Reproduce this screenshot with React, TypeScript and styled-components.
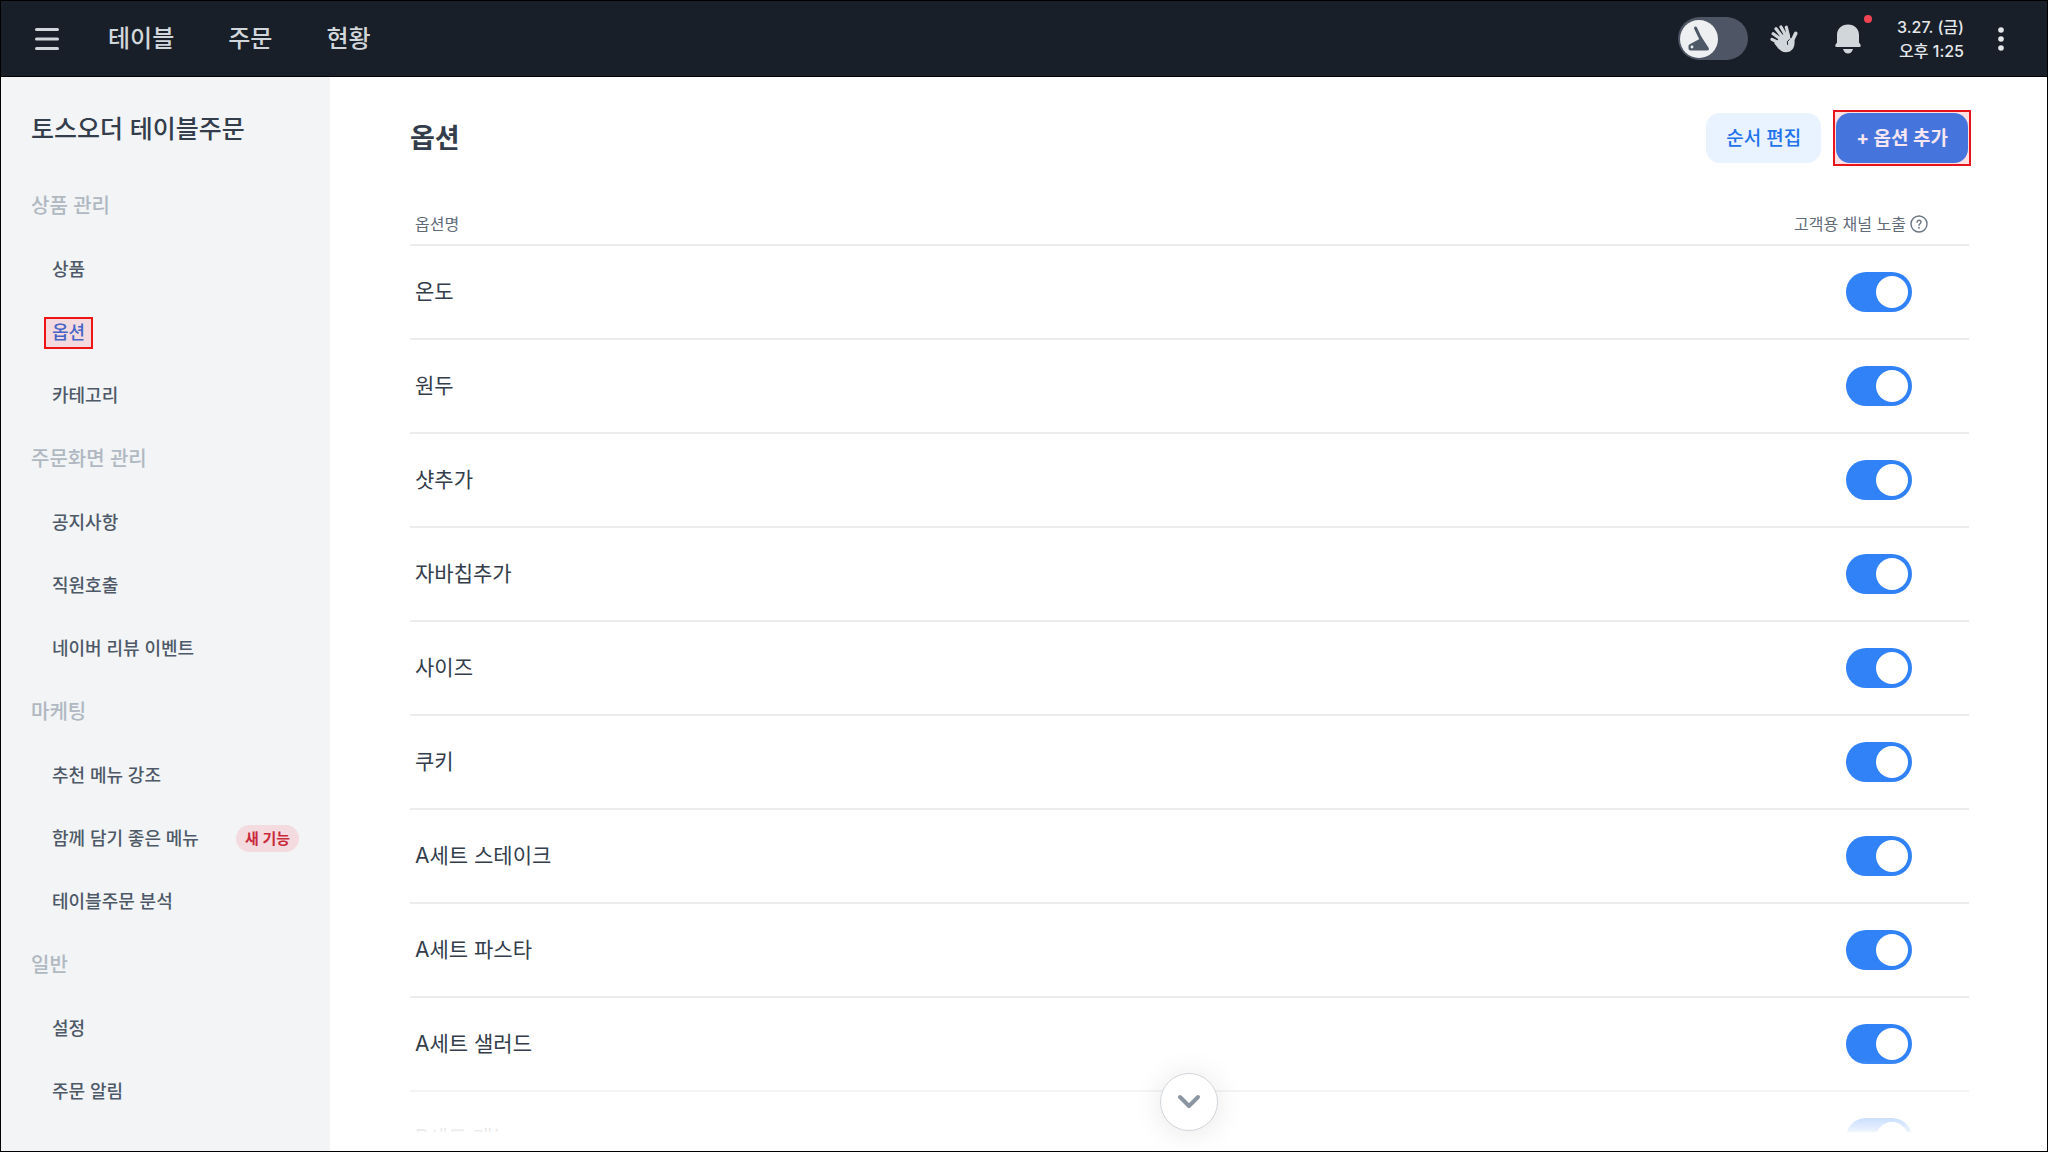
import React from "react";
import styled, { createGlobalStyle } from "styled-components";

const Global = createGlobalStyle`
  * { box-sizing: border-box; }
  body { margin: 0; font-family: Inter, "Noto Sans CJK KR", sans-serif; color: #333d4b; background: #fff; }
  button { font-family: inherit; border: 0; background: none; padding: 0; cursor: pointer; }
  a { color: inherit; text-decoration: none; }
  ul { list-style: none; margin: 0; padding: 0; }
`;

const Frame = styled.div`
  display: flex;
  flex-direction: column;
  height: 100vh;
  overflow: hidden;
  border: 1px solid #000;
`;

const TopBar = styled.header`
  display: flex;
  align-items: center;
  flex: none;
  height: 76px;
  padding: 0 30px;
  background: #191f28;
  border-bottom: 1px solid #000;
`;

const IconButton = styled.button`
  position: relative;
  display: flex;
  align-items: center;
  justify-content: center;
  width: 32px;
  height: 40px;
`;

const MainNav = styled.nav`
  display: flex;
  gap: 54px;
  margin-left: 45px;
  font-size: 24px;
  line-height: 32px;
  font-weight: 500;
  color: #d1d6db;
`;

const Status = styled.div`
  display: flex;
  align-items: center;
  margin-left: auto;
`;

const ModeSwitch = styled.label`
  position: relative;
  display: flex;
  align-items: center;
  width: 70px;
  height: 43px;
  padding: 0 2px;
  margin-right: 20px;
  border-radius: 22px;
  background: #4e5564;
  cursor: pointer;
`;

const HiddenCheck = styled.input`
  position: absolute;
  inset: 0;
  width: 100%;
  height: 100%;
  margin: 0;
  opacity: 0;
  cursor: pointer;
`;

const ModeKnob = styled.span`
  display: flex;
  align-items: center;
  justify-content: center;
  width: 38px;
  height: 38px;
  border-radius: 50%;
  background: #eeeff1;
`;

const BellButton = styled(IconButton)`
  margin-left: 32px;
`;

const AlertDot = styled.span`
  position: absolute;
  top: -4px;
  right: -8px;
  width: 8px;
  height: 8px;
  border-radius: 50%;
  background: #f04452;
`;

const Clock = styled.time`
  width: 70px;
  margin: 0 21px 0 30px;
  font-size: 16px;
  line-height: 24px;
  font-weight: 500;
  text-align: right;
  white-space: nowrap;
  color: #e5e8eb;
`;

const Body = styled.div`
  display: flex;
  flex: 1;
  min-height: 0;
`;

const SideBar = styled.aside`
  flex: none;
  width: 329px;
  padding: 32px 31px 0 30px;
  background: #f2f4f6;
`;

const SideTitle = styled.h2`
  margin: 0 0 26px;
  font-size: 25px;
  line-height: 40px;
  font-weight: 500;
`;

const Group = styled.section`
  margin-bottom: 1px;
`;

const GroupTitle = styled.h3`
  margin: 0;
  font-size: 20px;
  line-height: 63px;
  font-weight: 500;
  color: #b0b8c1;
`;

const SideItem = styled.li`
  display: flex;
  align-items: center;
  justify-content: space-between;
  height: 63px;
  padding-left: 13px;
`;

const SideLink = styled.a<{ $active?: boolean }>`
  padding: 0 6px;
  border: 2px solid ${(p) => (p.$active ? "#f01414" : "transparent")};
  background: ${(p) => (p.$active ? "#f3dade" : "transparent")};
  color: ${(p) => (p.$active ? "#4565c8" : "#4e5968")};
  font-size: 18px;
  line-height: 28px;
  font-weight: 500;
`;

const NewBadge = styled.span`
  padding: 0 9px;
  border-radius: 14px;
  background: #f4dbe0;
  color: #c92a3a;
  font-size: 15px;
  line-height: 27px;
  font-weight: 700;
`;

const Content = styled.main`
  position: relative;
  flex: 1;
  min-width: 0;
  padding: 33px 78px 0 80px;
  overflow: hidden;
`;

const Heading = styled.div`
  display: flex;
  align-items: center;
  justify-content: space-between;
  height: 56px;
  margin-right: -2px;
`;

const PageTitle = styled.h1`
  margin: 0;
  padding-top: 2px;
  font-size: 27px;
  line-height: 40px;
  font-weight: 700;
`;

const Actions = styled.div`
  display: flex;
  align-items: center;
  gap: 12px;
`;

const Action = styled.button<{ $primary?: boolean }>`
  height: 50px;
  padding: 2px 20px 0;
  border-radius: 14px;
  background: ${(p) => (p.$primary ? "#4575dc" : "#e8f3ff")};
  color: ${(p) => (p.$primary ? "#f6e6f2" : "#2272eb")};
  font-size: 19px;
  line-height: 28px;
  font-weight: ${(p) => (p.$primary ? 700 : 500)};
`;

const Marked = styled.div`
  display: flex;
  padding: 1px;
  border: 2px solid #e8141c;
  background: #ffe1e4;
`;

const Table = styled.table`
  width: 100%;
  margin-top: 30px;
  border-collapse: collapse;
  text-align: left;
`;

const HeadCell = styled.th<{ $end?: boolean }>`
  height: 49px;
  padding: ${(p) => (p.$end ? "8px 41px 0 0" : "8px 5px 0")};
  border-bottom: 2px solid #eaecee;
  font-size: 16px;
  line-height: 24px;
  font-weight: 400;
  color: #616b78;
  text-align: ${(p) => (p.$end ? "right" : "left")};
`;

const HeadLabel = styled.span`
  display: inline-flex;
  align-items: center;
  gap: 4px;
`;

const Cell = styled.td<{ $end?: boolean }>`
  height: 94px;
  padding: ${(p) => (p.$end ? "0 57px 0 0" : "0 5px")};
  border-bottom: 2px solid #eaecee;
  font-size: 21px;
  line-height: 32px;
  font-weight: 400;
  text-align: ${(p) => (p.$end ? "right" : "left")};
`;

const Toggle = styled.input`
  appearance: none;
  display: inline-flex;
  align-items: center;
  justify-content: flex-end;
  vertical-align: middle;
  width: 66px;
  height: 40px;
  margin: 0;
  padding: 0 4px;
  border-radius: 20px;
  background: #3182f6;
  cursor: pointer;

  &::before {
    content: "";
    width: 32px;
    height: 32px;
    border-radius: 50%;
    background: #fff;
  }

  &:not(:checked) {
    justify-content: flex-start;
    background: #d1d6db;
  }
`;

const Fade = styled.div`
  position: absolute;
  left: 0;
  right: 0;
  bottom: 0;
  height: 96px;
  background: linear-gradient(rgba(255, 255, 255, 0) 4%, rgba(255, 255, 255, 0.9) 79%, #fff 81%);
  pointer-events: none;
`;

const ScrollDown = styled.button`
  position: absolute;
  left: 50%;
  bottom: 20px;
  display: flex;
  align-items: center;
  justify-content: center;
  width: 58px;
  height: 58px;
  transform: translateX(-50%);
  border: 1px solid #d1d6db;
  border-radius: 50%;
  background: #fff;
  box-shadow: 0 2px 30px rgba(0, 0, 0, 0.1);
`;

const groups = [
  { title: "상품 관리", items: ["상품", "옵션", "카테고리"] },
  { title: "주문화면 관리", items: ["공지사항", "직원호출", "네이버 리뷰 이벤트"] },
  { title: "마케팅", items: ["추천 메뉴 강조", "함께 담기 좋은 메뉴", "테이블주문 분석"] },
  { title: "일반", items: ["설정", "주문 알림"] },
];

const options = [
  "온도", "원두", "샷추가", "자바칩추가", "사이즈", "쿠키",
  "A세트 스테이크", "A세트 파스타", "A세트 샐러드", "B세트 메뉴",
];

const MenuIcon = () => (
  <svg width="26" height="24" viewBox="0 0 26 24" stroke="#d1d6db" strokeWidth="3" strokeLinecap="round">
    <path d="M2.500 2.500H23.500M2.500 12H23.500M2.500 21.500H23.500" />
  </svg>
);

const PosIcon = () => (
  <svg width="24" height="28" viewBox="0 0 24 28" fill="none">
    <path d="M8.500 3L13.200 12.800" stroke="#4e5968" strokeWidth="3" strokeLinecap="round" />
    <path d="M14.200 11.500L21.700 23Q22.500 25.500 20 25.500H3.500Q1.500 25.500 1.500 23.500V21Q1.500 19.800 2.700 19.300L12.500 14Z" fill="#4e5968" />
    <circle cx="5" cy="22" r="1.400" fill="#eeeff1" />
  </svg>
);

const HandIcon = () => (
  <svg width="30" height="30" viewBox="0 0 30 30" fill="none" stroke="#d1d6db" strokeLinecap="round" strokeLinejoin="round">
    <path d="M11.500 15L4.200 9.800M13 12.500L7 4.800M16.500 11L12 3M19.500 12L17.300 3.200M10 19L3 15.300" strokeWidth="3.200" />
    <path d="M22.500 17.500Q25 13.500 26.800 9.300" strokeWidth="3.600" />
    <path d="M9 17L12.500 11.500L19.500 10.500L21 15.500L24.500 15Q26 23 21 26.500Q14.500 29.500 9.500 23.500L6 19Z" fill="#d1d6db" strokeWidth="1.500" />
    <path d="M20.200 15.500Q17 17.500 18.500 20.500" stroke="#191f28" strokeWidth="1" />
  </svg>
);

const BellIcon = () => (
  <svg width="28" height="32" viewBox="0 0 28 32" fill="#d1d6db">
    <path d="M14 1.500C7.500 1.500 3 6 3 12V19.500L1.300 22Q0.700 24 2.500 24H25.500Q27.300 24 26.700 22L25 19.500V12C25 6 20.500 1.500 14 1.500Z" />
    <path d="M9 26H19Q17.500 30.500 14 30.500Q10.500 30.500 9 26Z" />
  </svg>
);

const MoreIcon = () => (
  <svg width="8" height="26" viewBox="0 0 8 26" fill="#e5e8eb">
    <circle cx="4" cy="4" r="2.800" />
    <circle cx="4" cy="13" r="2.800" />
    <circle cx="4" cy="22" r="2.800" />
  </svg>
);

const HelpIcon = () => (
  <svg width="18" height="18" viewBox="0 0 18 18" fill="none" stroke="#6b7684" strokeWidth="1.400" strokeLinecap="round">
    <circle cx="9" cy="9" r="8" />
    <path d="M7 7.200Q7.200 5.300 9 5.300Q11 5.300 11 7.100Q11 8.200 9.900 8.800Q9 9.300 9 10.300" />
    <path d="M9 12.700V12.800" strokeWidth="1.800" />
  </svg>
);

const ChevronIcon = () => (
  <svg width="24" height="16" viewBox="0 0 24 16" fill="none" stroke="#8b95a1" strokeWidth="4" strokeLinecap="round" strokeLinejoin="round">
    <path d="M3 3L12 12L21 3" />
  </svg>
);

export default function App() {
  return (
    <>
      <Global />
      <Frame>
        <TopBar>
          <IconButton aria-label="메뉴"><MenuIcon /></IconButton>
          <MainNav>
            <a href="#tables">테이블</a>
            <a href="#orders">주문</a>
            <a href="#status">현황</a>
          </MainNav>
          <Status>
            <ModeSwitch>
              <HiddenCheck type="checkbox" aria-label="포스 모드" />
              <ModeKnob><PosIcon /></ModeKnob>
            </ModeSwitch>
            <IconButton aria-label="직원호출"><HandIcon /></IconButton>
            <BellButton aria-label="알림"><BellIcon /><AlertDot /></BellButton>
            <Clock>3.27. (금)<br />오후 1:25</Clock>
            <IconButton aria-label="더보기"><MoreIcon /></IconButton>
          </Status>
        </TopBar>
        <Body>
          <SideBar>
            <SideTitle>토스오더 테이블주문</SideTitle>
            {groups.map((group) => (
              <Group key={group.title}>
                <GroupTitle>{group.title}</GroupTitle>
                <ul>
                  {group.items.map((item) => (
                    <SideItem key={item}>
                      <SideLink href="#menu" $active={item === "옵션"}>{item}</SideLink>
                      {item === "함께 담기 좋은 메뉴" && <NewBadge>새 기능</NewBadge>}
                    </SideItem>
                  ))}
                </ul>
              </Group>
            ))}
          </SideBar>
          <Content>
            <Heading>
              <PageTitle>옵션</PageTitle>
              <Actions>
                <Action>순서 편집</Action>
                <Marked><Action $primary>+ 옵션 추가</Action></Marked>
              </Actions>
            </Heading>
            <Table>
              <thead>
                <tr>
                  <HeadCell>옵션명</HeadCell>
                  <HeadCell $end><HeadLabel>고객용 채널 노출<HelpIcon /></HeadLabel></HeadCell>
                </tr>
              </thead>
              <tbody>
                {options.map((name) => (
                  <tr key={name}>
                    <Cell>{name}</Cell>
                    <Cell $end><Toggle type="checkbox" defaultChecked aria-label={name} /></Cell>
                  </tr>
                ))}
              </tbody>
            </Table>
            <Fade />
            <ScrollDown aria-label="아래로"><ChevronIcon /></ScrollDown>
          </Content>
        </Body>
      </Frame>
    </>
  );
}
